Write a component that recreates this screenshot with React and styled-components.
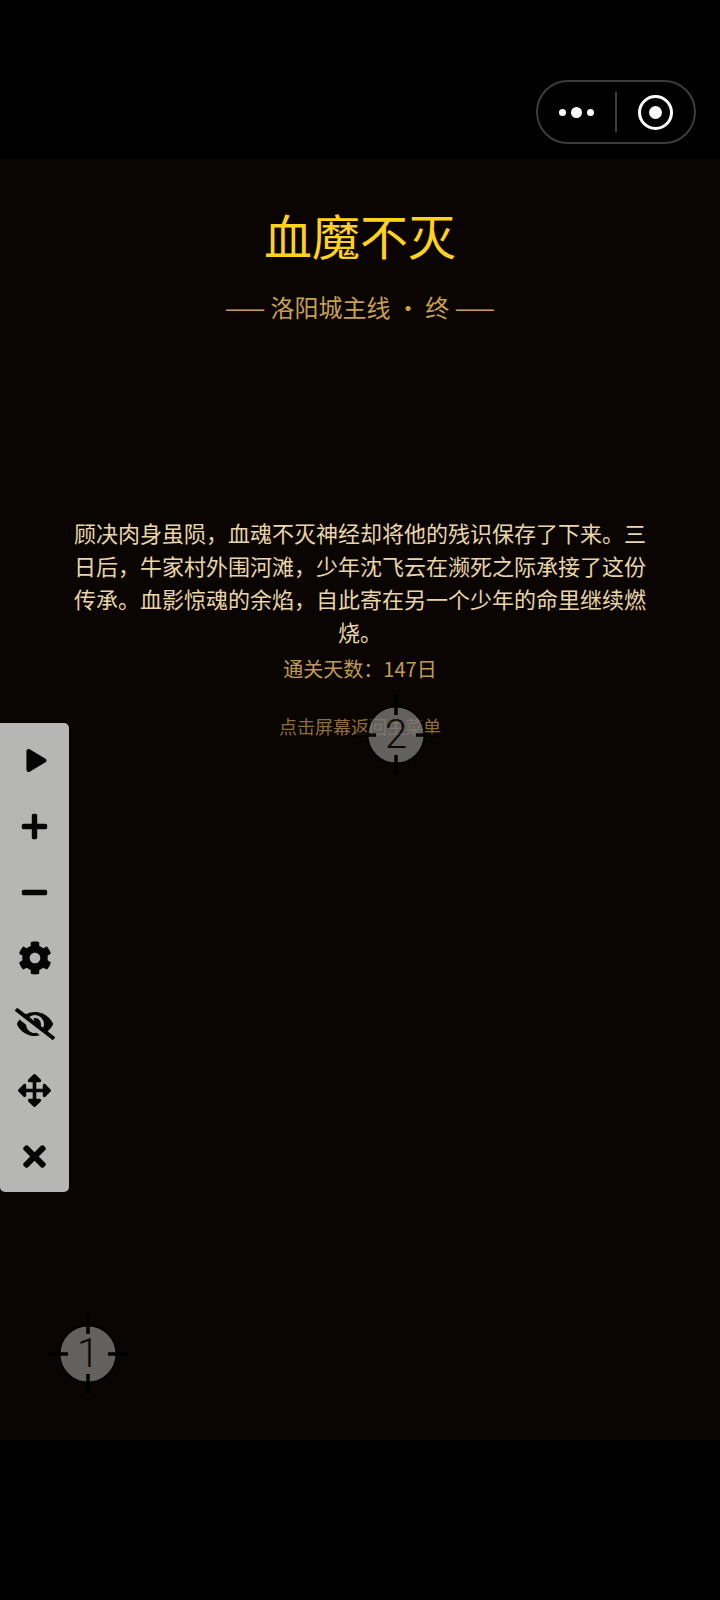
import React from "react";
import styled, { createGlobalStyle } from "styled-components";
import { FaPlay, FaPlus, FaMinus, FaCog, FaEyeSlash, FaArrowsAlt, FaTimes } from "react-icons/fa";

const Global = createGlobalStyle`
  html, body { margin: 0; padding: 0; background: #000; }
  body { font-family: "Noto Sans CJK SC", "Liberation Sans", sans-serif; }
`;

const Page = styled.div`
  position: relative;
  width: 720px;
  height: 1600px;
  overflow: hidden;
  background: #000;
  display: flex;
  flex-direction: column;
`;

const TopBar = styled.header`
  height: 159px;
  flex: none;
  box-sizing: border-box;
  padding: 80px 24px 0 0;
  display: flex;
  justify-content: flex-end;
  align-items: flex-start;
`;

const Capsule = styled.div`
  width: 160px;
  height: 64px;
  box-sizing: border-box;
  border: 2px solid #3c3c3c;
  border-radius: 32px;
  display: grid;
  grid-template-columns: 1fr 2px 1fr;
  align-items: center;
  justify-items: center;
`;

const Dots = styled.div`
  display: flex;
  align-items: center;
  gap: 5px;
`;

const Dot = styled.span`
  width: ${(p) => p.$size}px;
  height: ${(p) => p.$size}px;
  border-radius: 50%;
  background: #fff;
`;

const Divider = styled.span`
  width: 2px;
  height: 40px;
  background: #3c3c3c;
`;

const Record = styled.span`
  width: 35px;
  height: 35px;
  box-sizing: border-box;
  border: 3px solid #fff;
  border-radius: 50%;
  display: flex;
  align-items: center;
  justify-content: center;
  &::after {
    content: "";
    width: 13px;
    height: 13px;
    border-radius: 50%;
    background: #fff;
  }
`;

const Stage = styled.main`
  height: 1281px;
  flex: none;
  background: #0a0503;
  display: flex;
  flex-direction: column;
  align-items: center;
  box-sizing: border-box;
  padding-top: 40px;
`;

const Title = styled.h1`
  margin: 0;
  font-size: 48px;
  line-height: 70px;
  font-weight: 400;
  color: #ffd21f;
`;

const Subtitle = styled.div`
  margin-top: 20px;
  font-size: 24px;
  line-height: 36px;
  color: #c8a050;
  white-space: pre;
`;

const Story = styled.p`
  margin: 191px 0 0;
  width: 580px;
  font-size: 22px;
  line-height: 33px;
  text-align: center;
  color: #e8d5a8;
`;

const Days = styled.div`
  margin-top: 6px;
  font-size: 20px;
  line-height: 30px;
  color: #c09a55;
`;

const Hint = styled.div`
  margin-top: 29px;
  font-size: 18px;
  line-height: 27px;
  color: #8f6d36;
`;

const Toolbar = styled.nav`
  position: absolute;
  left: 0;
  top: 723px;
  width: 69px;
  height: 469px;
  box-sizing: border-box;
  padding: 4px 0;
  border-radius: 0 5px 5px 5px;
  background: #b6b6b4;
  display: grid;
  grid-auto-rows: 66px;
  justify-items: center;
  align-items: center;
`;

const ToolIcon = styled.span`
  display: flex;
  color: #050505;
  font-size: ${(p) => p.$size}px;
  margin-left: ${(p) => p.$shift || 0}px;
`;

const Marker = styled.div`
  position: absolute;
  left: ${(p) => p.$x - 42}px;
  top: ${(p) => p.$y - 42}px;
  width: 84px;
  height: 84px;
  display: flex;
  align-items: center;
  justify-content: center;
  opacity: 0.8;
`;

const MarkerShape = styled.svg`
  position: absolute;
  inset: 0;
`;

const MarkerNumber = styled.span`
  position: relative;
  font-family: "Roboto", "Liberation Sans", sans-serif;
  font-weight: 300;
  font-size: 40px;
  line-height: 1;
  color: #0a0a0a;
`;

const tools = [
  { Icon: FaPlay, size: 23, shift: 3 },
  { Icon: FaPlus, size: 29 },
  { Icon: FaMinus, size: 29 },
  { Icon: FaCog, size: 34 },
  { Icon: FaEyeSlash, size: 40 },
  { Icon: FaArrowsAlt, size: 33 },
  { Icon: FaTimes, size: 33 },
];

function TouchMarker({ x, y, n }) {
  return (
    <Marker $x={x} $y={y}>
      <MarkerShape viewBox="0 0 84 84" width="84" height="84">
        <circle cx="42" cy="42" r="28.5" fill="#7a7876" stroke="#000" strokeWidth="2" />
        <g stroke="#000" strokeWidth="3.5">
          <path d="M42 2V22M42 62V82M2 42H22M62 42H82" />
        </g>
      </MarkerShape>
      <MarkerNumber>{n}</MarkerNumber>
    </Marker>
  );
}

export default function App() {
  return (
    <Page>
      <Global />
      <TopBar>
        <Capsule>
          <Dots>
            <Dot $size={7} />
            <Dot $size={11} />
            <Dot $size={7} />
          </Dots>
          <Divider />
          <Record />
        </Capsule>
      </TopBar>
      <Stage>
        <Title>血魔不灭</Title>
        <Subtitle>—— 洛阳城主线 · 终 ——</Subtitle>
        <Story>
          顾决肉身虽陨，血魂不灭神经却将他的残识保存了下来。三日后，牛家村外围河滩，少年沈飞云在濒死之际承接了这份传承。血影惊魂的余焰，自此寄在另一个少年的命里继续燃烧。
        </Story>
        <Days>通关天数：147日</Days>
        <Hint>点击屏幕返回主菜单</Hint>
      </Stage>
      <Toolbar>
        {tools.map(({ Icon, size, shift }, i) => (
          <ToolIcon key={i} $size={size} $shift={shift}>
            <Icon />
          </ToolIcon>
        ))}
      </Toolbar>
      <TouchMarker x={396} y={735} n={2} />
      <TouchMarker x={88} y={1354} n={1} />
    </Page>
  );
}
